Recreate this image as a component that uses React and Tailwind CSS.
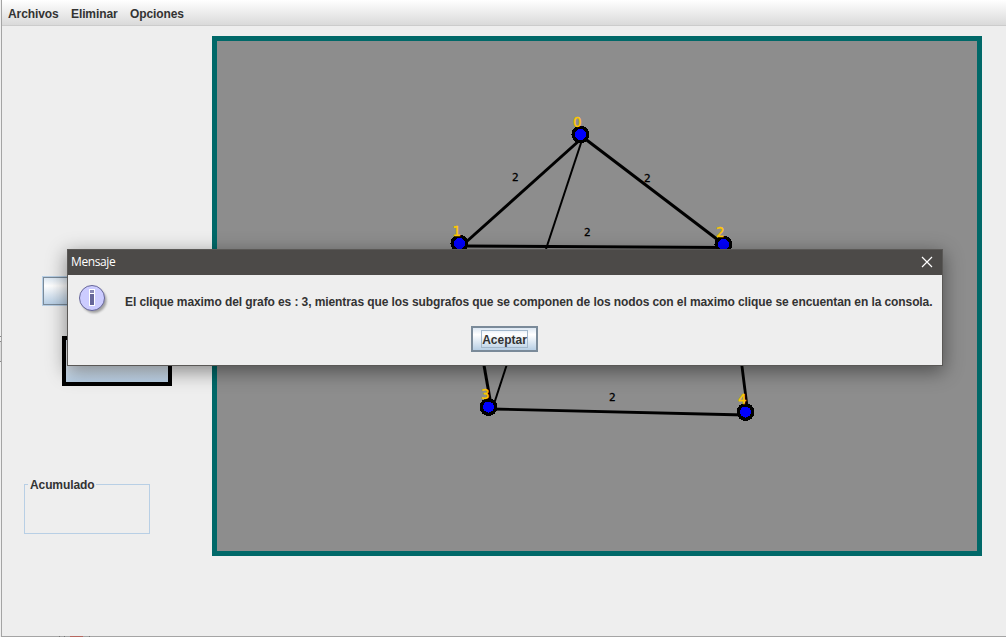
import React from 'react';

const NODES = [
  { id: '0', x: 580.5, y: 134.5, lx: 573, ly: 127 },
  { id: '1', x: 459.5, y: 243.5, lx: 452.5, ly: 236 },
  { id: '2', x: 723.5, y: 244.5, lx: 716, ly: 237 },
  { id: '3', x: 488.5, y: 407, lx: 481, ly: 399 },
  { id: '4', x: 745.5, y: 412, lx: 738, ly: 404 },
];

const EDGES = [
  { x1: 581, y1: 139, x2: 465, y2: 243, w: 3 },
  { x1: 584, y1: 138, x2: 722, y2: 243, w: 3 },
  { x1: 463, y1: 246, x2: 724, y2: 247.5, w: 2.8 },
  { x1: 582, y1: 140, x2: 546, y2: 249, w: 2 },
  { x1: 463, y1: 246, x2: 491, y2: 405, w: 3 },
  { x1: 507, y1: 364, x2: 493, y2: 407, w: 2 },
  { x1: 727, y1: 248, x2: 748, y2: 414, w: 2.8 },
  { x1: 492, y1: 409, x2: 745, y2: 415, w: 2.8 },
];

const WEIGHTS = [
  [512, 181],
  [644, 182],
  [584, 236],
  [609, 401],
];

function MenuBar() {
  return (
    <nav className="flex h-[26px] shrink-0 items-center gap-[13px] border-b border-[#cccccc] bg-linear-to-b from-white to-[#dadada] pl-[6px] pt-[2px] tracking-[-0.1px]">
      <span className="w-[50px] whitespace-nowrap">Archivos</span>
      <span className="w-[46px] whitespace-nowrap">Eliminar</span>
      <span className="whitespace-nowrap">Opciones</span>
    </nav>
  );
}

function Sidebar() {
  return (
    <aside className="flex w-[210px] shrink-0 flex-col">
      <div className="ml-[40px] mt-[250px] h-[30px] w-[150px] border border-[#b8cfe5] bg-[#7a8a99]">
        <div className="h-full w-full border border-[#7a8a99] bg-linear-to-b from-[#dde8f3] via-white via-30% to-[#b8cfe5]" />
      </div>
      <div className="ml-[60px] mt-[30px] h-[50px] w-[110px] border-4 border-black bg-linear-to-b from-[#dde8f3] via-white via-30% to-[#b8cfe5]" />
      <fieldset className="ml-[22px] mt-[91px] h-[57px] w-[126px] border border-[#b8cfe5] pl-[3px]">
        <legend className="h-[15px] w-[68px] whitespace-nowrap pl-[2px] pt-px leading-[15px] tracking-[-0.1px]">Acumulado</legend>
      </fieldset>
    </aside>
  );
}

function GraphCanvas() {
  return (
    <section className="mt-[10px] h-[520px] w-[770px] shrink-0 border-[5px] border-[#006868] bg-[#8d8d8d]">
      <svg viewBox="217 41 760 510" width="760" height="510" className="block">
        {EDGES.map((e, i) => (
          <line key={i} x1={e.x1} y1={e.y1} x2={e.x2} y2={e.y2} stroke="#000" strokeWidth={e.w} />
        ))}
        {NODES.map((n) => (
          <g key={n.id}>
            <circle cx={n.x} cy={n.y} r="9" fill="#000" shapeRendering="crispEdges" />
            <circle cx={n.x} cy={n.y} r="5.5" fill="#0000ff" shapeRendering="crispEdges" />
            <text x={n.lx} y={n.ly} fill="#ffc800" stroke="#ffc800" strokeWidth="0.35" fontSize="13.5" fontWeight="400" fontFamily="'DejaVu Sans', sans-serif">{n.id}</text>
          </g>
        ))}
        {WEIGHTS.map(([x, y]) => (
          <text key={x} x={x} y={y} fill="#000" stroke="#000" strokeWidth="0.3" fontSize="11" fontWeight="400" fontFamily="'DejaVu Sans Mono', monospace">2</text>
        ))}
      </svg>
    </section>
  );
}

function InfoIcon() {
  return (
    <svg width="32" height="32" viewBox="0 0 32 32" className="shrink-0">
      <defs>
        <filter id="soft" x="-30%" y="-30%" width="160%" height="160%">
          <feGaussianBlur stdDeviation="1.3" />
        </filter>
      </defs>
      <circle cx="16" cy="16.5" r="12.5" fill="#777" opacity="0.65" filter="url(#soft)" />
      <circle cx="14" cy="14" r="12.5" fill="#ccccff" stroke="#666699" />
      <rect x="11" y="5" width="6" height="17" fill="#fff" />
      <rect x="12" y="6" width="4" height="3" fill="#8888b4" />
      <rect x="12" y="10" width="4" height="11" fill="#666699" />
    </svg>
  );
}

function MessageDialog() {
  return (
    <div role="dialog" className="absolute left-[67px] top-[249px] flex h-[117px] w-[876px] flex-col border border-[#5a5856] bg-[#eeeeee] shadow-[0_5px_18px_1px_rgba(0,0,0,0.42)]">
      <header className="flex h-[25px] shrink-0 items-center justify-between bg-[#4c4a48] pb-[2px] pl-[3px] pr-[9px] font-['Open_Sans',sans-serif] text-[12px] font-normal text-white">
        <span className="tracking-[-0.4px]">Mensaje</span>
        <svg width="12" height="12" viewBox="0 0 12 12" aria-hidden="true">
          <path d="M1 1L11 11M11 1L1 11" stroke="#fff" strokeWidth="1.2" />
        </svg>
      </header>
      <div className="flex h-[51px] items-start pl-[10px] pt-[9px]">
        <InfoIcon />
        <p className="ml-[15px] mt-[11px] w-[808px] whitespace-nowrap leading-[15px] tracking-[-0.087px]">
          El clique maximo del grafo es : 3, mientras que los subgrafos que se componen de los nodos con el maximo clique se encuentan en la consola.
        </p>
      </div>
      <button className="ml-[403px] flex h-[26px] w-[67px] items-center justify-center border-2 border-[#7a8a99] bg-linear-to-b from-[#dde8f3] via-white via-30% to-[#b8cfe5]">
        <span className="flex h-[18px] w-[47px] items-center justify-center border border-[#a3b8cc] pt-px">Aceptar</span>
      </button>
    </div>
  );
}

export default function App() {
  return (
    <div className="relative flex h-[637px] w-[1006px] overflow-hidden bg-[#eeeeee] font-['Liberation_Sans',Arial,sans-serif] text-[12px] font-bold text-[#333333]">
      <div className="flex w-px shrink-0 flex-col bg-[#f0f0f0] pt-[336px]">
        <div className="h-[6px] border-y border-[#888888]" />
        <div className="h-[20px] border-b border-[#888888] bg-[#dcdcdc]" />
      </div>
      <div className="flex grow flex-col border-b border-l border-[#a4a4a4]">
        <MenuBar />
        <main className="flex h-[604px] shrink-0">
          <Sidebar />
          <GraphCanvas />
        </main>
        <div className="mt-[6px] flex h-px shrink-0 gap-[4px] pl-[57px]">
          <i className="w-px bg-[#777777]" />
          <i className="w-px bg-[#777777]" />
          <i className="ml-[1px] w-[13px] bg-[#b5675f]" />
          <i className="ml-[2px] w-px bg-[#777777]" />
        </div>
      </div>
      <MessageDialog />
    </div>
  );
}
